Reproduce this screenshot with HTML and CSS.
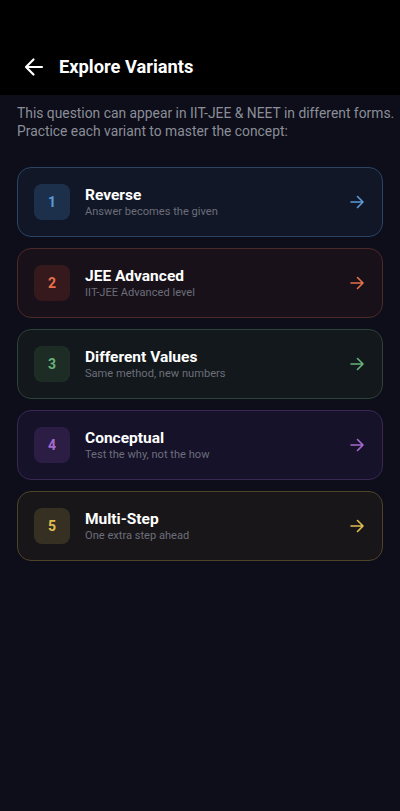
FILE: index.html
```html
<!DOCTYPE html>
<html lang="en">
<head>
<meta charset="UTF-8">
<meta name="viewport" content="width=device-width, initial-scale=1.0">
<title>Explore Variants</title>
<link rel="stylesheet" href="styles.css">
</head>
<body>

<header class="top-bar">
  <button class="back-btn" aria-label="Back">
    <svg width="20" height="20" viewBox="0 0 20 20" fill="none" stroke="#fff" stroke-width="2.2" stroke-linecap="round" stroke-linejoin="round">
      <path d="M18 10H2.5M9.5 2.5L2 10l7.5 7.5"/>
    </svg>
  </button>
  <h1 class="title">Explore Variants</h1>
</header>

<main class="content">
  <p class="intro">This question can appear in IIT-JEE &amp; NEET in different forms.<br>Practice each variant to master the concept:</p>

  <div class="variant-list">
    <div class="variant blue">
      <div class="num">1</div>
      <div class="info">
        <div class="name">Reverse</div>
        <div class="desc">Answer becomes the given</div>
      </div>
      <svg class="arrow" width="14" height="14" viewBox="0 0 14 14" fill="none" stroke="currentColor" stroke-width="1.6" stroke-linecap="round" stroke-linejoin="round"><path d="M1 7h12M7.5 1.5L13 7l-5.5 5.5"/></svg>
    </div>
    <div class="variant red">
      <div class="num">2</div>
      <div class="info">
        <div class="name">JEE Advanced</div>
        <div class="desc">IIT-JEE Advanced level</div>
      </div>
      <svg class="arrow" width="14" height="14" viewBox="0 0 14 14" fill="none" stroke="currentColor" stroke-width="1.6" stroke-linecap="round" stroke-linejoin="round"><path d="M1 7h12M7.5 1.5L13 7l-5.5 5.5"/></svg>
    </div>
    <div class="variant green">
      <div class="num">3</div>
      <div class="info">
        <div class="name">Different Values</div>
        <div class="desc">Same method, new numbers</div>
      </div>
      <svg class="arrow" width="14" height="14" viewBox="0 0 14 14" fill="none" stroke="currentColor" stroke-width="1.6" stroke-linecap="round" stroke-linejoin="round"><path d="M1 7h12M7.5 1.5L13 7l-5.5 5.5"/></svg>
    </div>
    <div class="variant purple">
      <div class="num">4</div>
      <div class="info">
        <div class="name">Conceptual</div>
        <div class="desc">Test the why, not the how</div>
      </div>
      <svg class="arrow" width="14" height="14" viewBox="0 0 14 14" fill="none" stroke="currentColor" stroke-width="1.6" stroke-linecap="round" stroke-linejoin="round"><path d="M1 7h12M7.5 1.5L13 7l-5.5 5.5"/></svg>
    </div>
    <div class="variant yellow">
      <div class="num">5</div>
      <div class="info">
        <div class="name">Multi-Step</div>
        <div class="desc">One extra step ahead</div>
      </div>
      <svg class="arrow" width="14" height="14" viewBox="0 0 14 14" fill="none" stroke="currentColor" stroke-width="1.6" stroke-linecap="round" stroke-linejoin="round"><path d="M1 7h12M7.5 1.5L13 7l-5.5 5.5"/></svg>
    </div>
  </div>
</main>

</body>
</html>
```

FILE: styles.css
```css
body {
  margin: 0;
  background-color: #0d0e19;
  font-family: Roboto, "Noto Sans", sans-serif;
  color: #fff;
  min-height: 811px;
}
.top-bar {
  background-color: #000;
  height: 95px;
  display: flex;
  align-items: flex-end;
  padding: 0 0 14px 24px;
  box-sizing: border-box;
}
.back-btn {
  background: none;
  border: none;
  padding: 0;
  width: 20px;
  height: 20px;
  margin-bottom: 4px;
  display: flex;
}
.title {
  margin: 0 0 0 15px;
  font-size: 18.3px;
  font-weight: 700;
  line-height: 28px;
}
.content {
  padding: 9px 17px 0 17px;
}
.intro {
  margin: 0 0 27px 0;
  font-size: 13.85px;
  line-height: 18px;
  color: #8b8d98;
  white-space: nowrap;
}
.variant-list {
  display: flex;
  flex-direction: column;
  gap: 11px;
}
.variant {
  display: flex;
  align-items: center;
  height: 70px;
  box-sizing: border-box;
  border: 1px solid;
  border-radius: 14px;
  padding: 0 18px 0 16px;
}
.num {
  width: 36px;
  height: 36px;
  border-radius: 8px;
  display: flex;
  align-items: center;
  justify-content: center;
  font-size: 14px;
  font-weight: 700;
  flex-shrink: 0;
}
.info {
  flex: 1;
  margin-left: 15px;
}
.name {
  font-size: 15.5px;
  font-weight: 700;
  line-height: 19px;
  color: #fff;
}
.desc {
  font-size: 11.1px;
  line-height: 14px;
  color: #6c6e7a;
}
.blue { background: #111726; border-color: #2a4465; color: #5a9ad8; }
.blue .num { background: #1d304b; }
.red { background: #181119; border-color: #4d2a2a; color: #e6704a; }
.red .num { background: #35191c; }
.green { background: #13181c; border-color: #2c4335; color: #68b27a; }
.green .num { background: #1d2d26; }
.purple { background: #16122a; border-color: #3a2752; color: #a76ad0; }
.purple .num { background: #2b1d43; }
.yellow { background: #191619; border-color: #4f4329; color: #e0be52; }
.yellow .num { background: #353022; }
```
